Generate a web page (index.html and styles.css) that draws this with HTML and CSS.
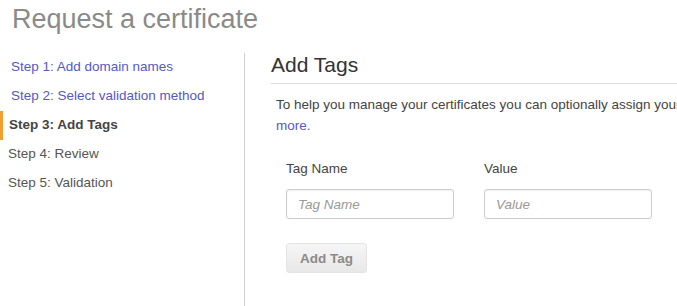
FILE: index.html
```html
<!DOCTYPE html>
<html>
<head>
<meta charset="utf-8">
<link rel="stylesheet" href="styles.css">
</head>
<body>
<h1 class="title">Request a certificate</h1>
<div class="layout">
  <nav class="steps">
    <a class="step link">Step 1: Add domain names</a>
    <a class="step link">Step 2: Select validation method</a>
    <div class="step active">Step 3: Add Tags</div>
    <div class="step plain">Step 4: Review</div>
    <div class="step plain">Step 5: Validation</div>
  </nav>
  <main class="content">
    <div class="content-inner">
      <h2 class="section-title">Add Tags</h2>
      <p class="desc">To help you manage your certificates you can optionally assign your own metadata to each resource in the form of tags. <a class="link">Learn more.</a></p>
      <div class="tag-grid">
        <div class="field">
          <label class="label">Tag Name</label>
          <input class="input" placeholder="Tag Name">
        </div>
        <div class="field">
          <label class="label">Value</label>
          <input class="input" placeholder="Value">
        </div>
      </div>
      <button class="btn">Add Tag</button>
    </div>
  </main>
</div>
</body>
</html>
```
FILE: styles.css
```css
html, body {
  margin: 0;
  padding: 0;
  background: #fff;
  font-family: "Liberation Sans", Arial, sans-serif;
  overflow: hidden;
}
.title {
  margin: 0;
  padding: 5px 0 0 12px;
  font-size: 27px;
  font-weight: normal;
  color: #8a8a8a;
  line-height: 28px;
  height: 48px;
  box-sizing: border-box;
  white-space: nowrap;
}
.layout {
  display: flex;
  margin-top: 5px;
}
.steps {
  flex: none;
  width: 245px;
  border-right: 1px solid #cfcfcf;
  display: flex;
  flex-direction: column;
  padding-top: 0;
  height: 260px;
  box-sizing: border-box;
}
.step {
  font-size: 13.5px;
  line-height: 16px;
  padding: 6px 0 7px 11px;
  white-space: nowrap;
}
.link {
  color: #5559c4;
  text-decoration: none;
}
.step.active {
  font-weight: bold;
  color: #444;
  padding-left: 6px;
  border-left: 3px solid #f0a030;
}
.step.plain {
  color: #555;
  padding-left: 8px;
}
.content {
  flex: 1;
  min-width: 0;
  overflow: hidden;
}
.content-inner {
  width: 760px;
  padding-left: 26px;
}
.section-title {
  margin: 0;
  font-size: 21px;
  font-weight: normal;
  color: #333;
  line-height: 24px;
  padding-bottom: 6px;
  border-bottom: 1px solid #ddd;
  white-space: nowrap;
}
.desc {
  margin: 10px 0 0 5px;
  font-size: 13.5px;
  line-height: 21px;
  color: #444;
  width: 760px;
}
.tag-grid {
  display: flex;
  gap: 30px;
  margin: 25px 0 0 15px;
}
.field {
  display: flex;
  flex-direction: column;
}
.label {
  font-size: 13.5px;
  color: #444;
  line-height: 16px;
  margin-bottom: 12px;
}
.input {
  width: 168px;
  height: 30px;
  box-sizing: border-box;
  border: 1px solid #ccc;
  border-radius: 3px;
  padding: 0 11px;
  font-family: "Liberation Sans", Arial, sans-serif;
  font-size: 13.5px;
  font-style: italic;
  box-shadow: inset 0 1px 2px rgba(0,0,0,0.06);
}
.input::placeholder {
  color: #999;
}
.btn {
  display: block;
  margin: 24px 0 0 15px;
  width: 81px;
  height: 30px;
  border: 1px solid #e4e4e4;
  border-radius: 3px;
  background: linear-gradient(#f6f6f6, #e8e8e8);
  font-family: "Liberation Sans", Arial, sans-serif;
  font-size: 13.5px;
  font-weight: bold;
  color: #8a8a8a;
}
```
